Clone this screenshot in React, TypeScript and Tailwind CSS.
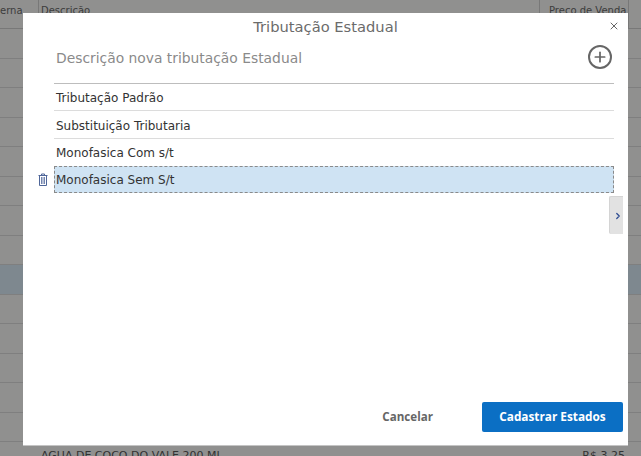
import { Plus, X, ChevronRight } from 'lucide-react';

const rows = [0, 1, 2, 3, 4, 5, 6, 7, 8, 9, 10, 11, 12, 13];

function TrashIcon() {
  return (
    <svg width="10" height="13" viewBox="0 0 10 13" className="text-[#4f6699]">
      <path d="M0.5 2.5h9M3.5 2.5V1h3v1.5" fill="none" stroke="currentColor" />
      <path d="M1.5 3v9.5h7V3" fill="none" stroke="currentColor" />
      <path d="M3.5 4v7M5 4v7M6.5 4v7" stroke="currentColor" strokeWidth="0.8" />
    </svg>
  );
}

export default function App() {
  return (
    <div className="relative h-[456px] w-[641px] overflow-hidden bg-[#f0f0ef] font-['DejaVu_Sans',sans-serif]">
      {/* grid behind the dialog */}
      <div className="flex h-[29px] border-b border-[#c9c9c9] text-[10px] text-[#666]">
        <div className="w-[38px] pr-[19px] pt-[3px] text-right">erna</div>
        <div className="flex-1 border-l border-[#c9c9c9] pl-[2px] pt-[3px]">Descrição</div>
        <div className="w-[89px] border-l border-[#c9c9c9] pl-[9px] pt-[3px]">Preco de Venda</div>
        <div className="w-[13px] border-l border-[#c9c9c9]" />
      </div>
      {rows.map((r) => (
        <div key={r} className={`h-[29.5px] border-b border-[#d4d4d4] ${r === 8 ? 'bg-[#d3e3ee]' : ''}`} />
      ))}
      <div className="absolute left-0 right-0 top-[448px] flex justify-between pl-[41px] pr-[16px] text-[11px] text-[#555]">
        <span>AGUA DE COCO DO VALE 200 ML</span>
        <span>R$ 3,25</span>
      </div>

      {/* overlay */}
      <div className="absolute inset-0 bg-[#000]/40" />

      {/* dialog */}
      <div className="absolute left-[23px] top-[13px] flex h-[433px] w-[605px] flex-col border-b border-[#c4c4c4] bg-white">
        <div className="relative h-[27px] pt-[4px] text-center text-[14.7px] leading-[20px] text-[#6b6b6b]">
          Tributação Estadual
          <button className="absolute right-[8px] top-[7px] text-[#555]">
            <X size={12} strokeWidth={1.8} />
          </button>
        </div>
        <div className="ml-[31px] mr-[14px] flex h-[44px] items-start justify-between border-b border-[#bdbdbd] pl-[2px] pt-[5px]">
          <span className="text-[13.85px] leading-[26px] text-[#8a8a8a]">Descrição nova tributação Estadual</span>
          <span className="mr-[2px] flex h-[24px] w-[24px] items-center justify-center rounded-full border-[2.5px] border-[#666] text-[#666]">
            <Plus size={16} strokeWidth={2.6} />
          </span>
        </div>
        <div className="ml-[31px] mr-[14px] text-[12px] text-[#333]">
          <div className="flex h-[27px] items-center border-b border-[#dcdcdc] pl-[2px] pt-[2px]">Tributação Padrão</div>
          <div className="flex h-[28px] items-center border-b border-[#dcdcdc] pl-[2px] pt-[2px]">Substituição Tributaria</div>
          <div className="flex h-[27px] items-center pl-[2px]">Monofasica Com s/t</div>
          <div className="relative flex h-[27px] items-center border border-dashed border-[#8a8a8a] bg-[#cfe3f3] pl-[1px] pt-[1px]">
            <span className="absolute left-[-17px] top-[6px]">
              <TrashIcon />
            </span>
            Monofasica Sem S/t
          </div>
        </div>
        <div className="absolute right-[5px] top-[183px] flex h-[38px] w-[14px] items-center justify-center rounded-l-[2px] border-l border-t border-[#d4d4d4] bg-[#e2e2e2] pl-[3px] text-[#2f4d92]">
          <ChevronRight size={12} strokeWidth={3} />
        </div>
        <div className="mt-auto mb-[13px] mr-[5px] flex items-center justify-end font-['Open_Sans',sans-serif]">
          <button className="mr-[49px] text-[11.6px] font-bold text-[#666]">Cancelar</button>
          <button className="h-[30px] w-[141px] rounded-[2px] bg-[#0b6fc4] text-[11.8px] font-bold text-white">
            Cadastrar Estados
          </button>
        </div>
      </div>
    </div>
  );
}
